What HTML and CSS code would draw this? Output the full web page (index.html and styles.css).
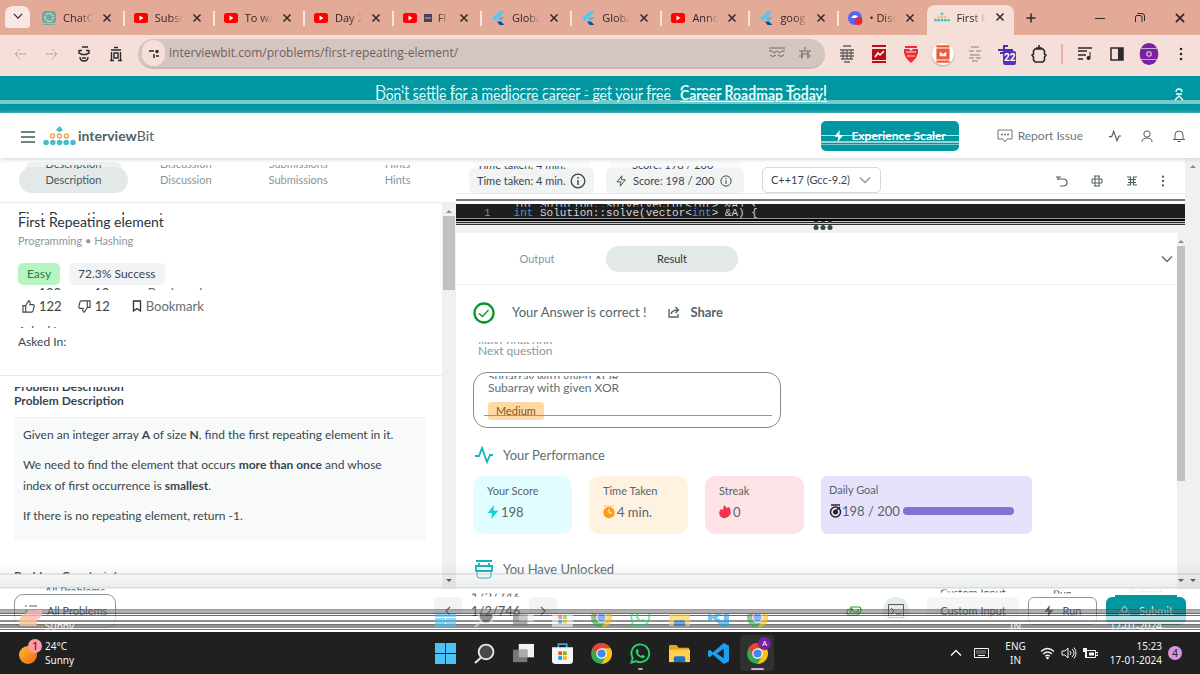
FILE: index.html
```html
<!DOCTYPE html>
<html lang="en">
<head>
<meta charset="utf-8">
<title>First Repeating element - InterviewBit</title>
<link rel="stylesheet" href="styles.css">
</head>
<body>
<svg class="defs" aria-hidden="true">
  <symbol id="x" viewBox="0 0 12 12"><path d="M2.500 2.500l7 7m0-7l-7 7" stroke="currentColor" stroke-width="1.500" fill="none"/></symbol>
  <symbol id="yt" viewBox="0 0 16 16"><rect x="1" y="3" width="14" height="10" rx="2.500" fill="#f00"/><path d="M6.500 5.500v5l4-2.500z" fill="#fff"/></symbol>
  <symbol id="flutter" viewBox="0 0 16 16"><path d="M10 1h5L5 11 2 8.500z" fill="#54c5f8"/><path d="M10 7h5l-4.500 4L8 9z" fill="#45bdf0"/><path d="M7 11.500h4l3.500 3.500h-5z" fill="#01579b"/></symbol>
  <symbol id="pyr" viewBox="0 0 33 20"><g fill="#4bbcc4"><path d="M16.500 0l4 4.500h-8z"/><circle cx="16.500" cy="4" r="2"/><circle cx="3" cy="16.500" r="2.800"/><circle cx="9.800" cy="16.500" r="2.800"/><circle cx="16.500" cy="16.500" r="2.800"/><circle cx="23.200" cy="16.500" r="2.800"/><circle cx="30" cy="16.500" r="2.800"/></g><g fill="none" stroke="#e8ab55" stroke-width="1.500"><circle cx="9.500" cy="10" r="2"/><circle cx="16.500" cy="10" r="2"/><circle cx="23.500" cy="10" r="2"/></g></symbol>
  <symbol id="bolt" viewBox="0 0 12 16"><path d="M7 0L0 9h5l-1 7 8-9.500H6.500z" fill="currentColor"/></symbol>
  <symbol id="boltline" viewBox="0 0 12 16"><path d="M7 2L1.500 9H6l-1 5 6-7.500H6.500z" fill="none" stroke="currentColor"/></symbol>
  <symbol id="info" viewBox="0 0 16 16"><circle cx="8" cy="8" r="6.800" fill="none" stroke="currentColor" stroke-width="1.300"/><path d="M8 7v5M8 4v1.500" stroke="currentColor" stroke-width="1.400"/></symbol>
  <symbol id="chev" viewBox="0 0 12 12"><path d="M1 3.500l5 5 5-5" fill="none" stroke="currentColor" stroke-width="1.400"/></symbol>
  <symbol id="pulse" viewBox="0 0 18 18"><path d="M0 10h4L7 2l5 14 3-7h3" fill="none" stroke="currentColor" stroke-width="1.800"/></symbol>
  <symbol id="thumb" viewBox="0 0 14 14"><path d="M1 6h3v7H1zM4 6l3-5c2 0 2 1.500 1.500 4H12c1 0 1.300.8 1 2l-1 4.500c-.2 1-.8 1.500-1.500 1.500H4" fill="none" stroke="currentColor" stroke-width="1.200"/></symbol>
  <symbol id="puzzle" viewBox="0 0 16 18"><path d="M5 3h6M8 0v3M2.500 6L4 4h8l1.500 2v3L15 10l-1.500 2v3L12 17H4l-1.500-2v-3L1 10l1.500-1z" fill="none" stroke="currentColor" stroke-width="1.600"/></symbol>
  <symbol id="win" viewBox="0 0 20 20"><path d="M0 0h9.600v9.600H0zM10.400 0H20v9.600h-9.600zM0 10.400h9.600V20H0zM10.400 10.400H20V20h-9.600z" fill="#4cc2f8"/></symbol>
  <symbol id="search" viewBox="0 0 20 20"><circle cx="11.500" cy="8.500" r="7" fill="#484848" stroke="#e6e6e6" stroke-width="1.800"/><path d="M6.500 14L1 19" stroke="#e6e6e6" stroke-width="2"/></symbol>
  <symbol id="tasks" viewBox="0 0 22 20"><path d="M6 0h16v14H6z" fill="#f2f2f2"/><path d="M0 6h15v13H0z" fill="#777"/><path d="M6 6h9v8H6z" fill="#aaa"/></symbol>
  <symbol id="store" viewBox="0 0 20 20"><path d="M6 5V1h8v4" fill="none" stroke="#32a9e8" stroke-width="1.600"/><path d="M0 4h20v13q0 3-3 3H3q-3 0-3-3z" fill="#f4f4f4"/><path d="M6 8h3.500v3.500H6z" fill="#f25022"/><path d="M10.500 8H14v3.500h-3.500z" fill="#7fba00"/><path d="M6 12.500h3.500V16H6z" fill="#00a4ef"/><path d="M10.500 12.500H14V16h-3.500z" fill="#ffb900"/></symbol>
  <symbol id="chrome" viewBox="0 0 20 20"><circle cx="10" cy="10" r="10" fill="#34a853"/><path d="M1.340 5A10 10 0 0 1 18.660 5H10L5.700 12.500z" fill="#ea4335"/><path d="M18.660 5A10 10 0 0 1 10 20l4.300-7.500L10 5z" fill="#fbc116"/><circle cx="10" cy="10" r="5" fill="#fff"/><circle cx="10" cy="10" r="3.900" fill="#4285f4"/></symbol>
  <symbol id="whats" viewBox="0 0 22 22"><path d="M1.500 20.500l1.300-5A9.300 9.300 0 1 1 6.500 19z" fill="none" stroke="#25d366" stroke-width="2"/><path d="M8 6l1.300 3-1 1.200c.8 1.600 2 2.700 3.500 3.300l1.200-1.300 2.600 1.300c0 2-1.800 2.800-3.500 2.300-3.200-1-5.500-3.500-6.100-6.300C5.900 7.700 6.700 6 8 6z" fill="#25d366"/></symbol>
  <symbol id="folder" viewBox="0 0 22 20"><path d="M0 2q0-1 1-1h7l2 3h11v14H0z" fill="#e8a317"/><path d="M0 6h22v13H0z" fill="#ffd04f"/><path d="M5 19v-4q0-2 2-2h8q2 0 2 2v4z" fill="#1976c5"/></symbol>
  <symbol id="vs" viewBox="0 0 20 20"><path d="M15 0l5 2.500v15L15 20 4.500 11 2 13.500 0 12.500v-5l2-1L4.500 9zM15 5.500L8.500 10l6.500 4.500z" fill="#1f9cf0"/></symbol>
  <symbol id="menu3" viewBox="0 0 4 16"><g fill="currentColor"><circle cx="2" cy="3" r="1.300"/><circle cx="2" cy="8" r="1.300"/><circle cx="2" cy="13" r="1.300"/></g></symbol>
</svg>

<nav class="browser-tabs" aria-label="Browser tabs">
  <button class="tab-search" aria-label="Search tabs"><svg width="10" height="10"><use href="#chev"/></svg></button>
  <div class="tab"><svg width="16" height="16" viewBox="0 0 16 16"><rect x="1" y="1" width="14" height="12" rx="3" fill="#74aa9c"/><circle cx="8" cy="7.500" r="4" fill="none" stroke="#fff" stroke-dasharray="2 1"/><path d="M2 14.500h12" stroke="#74aa9c"/></svg><span>ChatG</span><svg class="close"><use href="#x"/></svg></div>
  <div class="tab"><svg width="16" height="16"><use href="#yt"/></svg><span>Subsc</span><svg class="close"><use href="#x"/></svg></div>
  <div class="tab"><svg width="16" height="16"><use href="#yt"/></svg><span>To wa</span><svg class="close"><use href="#x"/></svg></div>
  <div class="tab"><svg width="16" height="16"><use href="#yt"/></svg><span>Day 2</span><svg class="close"><use href="#x"/></svg></div>
  <div class="tab"><svg width="16" height="16"><use href="#yt"/></svg><span><svg width="8" height="8" viewBox="0 0 8 8"><path d="M0 0h8v8H0z" fill="#445"/><path d="M1 4h6" stroke="#eac" /></svg>&nbsp; Fl</span><svg class="close"><use href="#x"/></svg></div>
  <div class="tab"><svg width="16" height="16"><use href="#flutter"/></svg><span>Globa</span><svg class="close"><use href="#x"/></svg></div>
  <div class="tab"><svg width="16" height="16"><use href="#flutter"/></svg><span>Globa</span><svg class="close"><use href="#x"/></svg></div>
  <div class="tab"><svg width="16" height="16"><use href="#yt"/></svg><span>Anno</span><svg class="close"><use href="#x"/></svg></div>
  <div class="tab"><svg width="16" height="16"><use href="#flutter"/></svg><span>goog</span><svg class="close"><use href="#x"/></svg></div>
  <div class="tab"><svg width="16" height="16" viewBox="0 0 16 16"><circle cx="8" cy="8" r="7" fill="#5865f2"/><path d="M4 8q4-6 8 0z" fill="#fff"/><circle cx="11.500" cy="11" r="4" fill="#e02b36"/></svg><span>• Disc</span><svg class="close"><use href="#x"/></svg></div>
  <div class="tab active"><svg width="16" height="10"><use href="#pyr"/></svg><span>First R</span><svg class="close"><use href="#x"/></svg></div>
  <button class="new-tab" aria-label="New tab"><svg width="12" height="12" viewBox="0 0 12 12"><path d="M6 1.500v9M1.500 6h9" stroke="currentColor" stroke-width="1.500"/></svg></button>
  <div class="window-controls">
    <button aria-label="Minimize"><svg width="10" height="10" viewBox="0 0 10 10"><path d="M0 5.500h10" stroke="currentColor"/></svg></button>
    <button aria-label="Restore"><svg width="10" height="10" viewBox="0 0 10 10"><path d="M.5 9V4q0-1.500 1.500-1.500h3Q7 2.500 7 4v5M2.500.5H7q2.500 0 2.500 2.500v5" fill="none" stroke="currentColor"/></svg></button>
    <button aria-label="Close window"><svg width="14" height="14"><use href="#x"/></svg></button>
  </div>
</nav>

<div class="toolbar">
  <div class="nav-buttons">
    <button class="faint" aria-label="Back"><svg width="12" height="16" viewBox="0 0 12 16"><path d="M12 8H2m4-5L1 8l5 5" fill="none" stroke="currentColor" stroke-dasharray="3 1"/></svg></button>
    <button class="faint" aria-label="Forward"><svg width="12" height="16" viewBox="0 0 12 16"><path d="M0 8h10M6 3l5 5-5 5" fill="none" stroke="currentColor" stroke-dasharray="3 1"/></svg></button>
    <button aria-label="Reload"><svg width="12" height="16" viewBox="0 0 12 16"><path d="M4 1h6M1 4.500h3M8 4.500h3M1 4v3l3 1.500h4L11 7V4M2 11q0 4 4 4t4-4M4 12h4" fill="none" stroke="currentColor" stroke-width="1.400"/></svg></button>
    <button aria-label="Home"><svg width="12" height="16" viewBox="0 0 12 16"><path d="M4 1.500h4M1 4h10M1.500 6v9M10.500 6v9M4 7h4v5H4zM0 14.500h4m4 0h4" fill="none" stroke="currentColor" stroke-width="1.400"/></svg></button>
  </div>
  <div class="omnibox">
    <button class="site" aria-label="Site information"><svg width="12" height="12" viewBox="0 0 12 12"><path d="M1 4h5m2 5h3M6 7v4" stroke="currentColor" stroke-width="1.500"/><circle cx="9" cy="4.500" r="1.700" fill="currentColor"/></svg></button>
    <input aria-label="Address" value="interviewbit.com/problems/first-repeating-element/">
    <svg width="18" height="12" viewBox="0 0 18 12"><path d="M1 1h16M1 4h3l2 2 3-2 3 2 2-2h3M2 8q3 3 6 0m2 0q3 3 6 0" stroke="#77656a" fill="none"/></svg>
    <svg width="14" height="14" viewBox="0 0 14 14"><path d="M7 1v3M1 5h12M3 8h8M4 5v8M10 5v8M1 10h4m4 0h4" stroke="#77656a"/></svg>
  </div>
  <div class="extensions">
    <svg viewBox="0 0 20 20"><g stroke="#66605f" stroke-width="1.300"><path d="M6 2h8M3 6h14M3 9h14M3 12h14M4 15h12M7 18h6M6 6v9M10 6v9M14 6v9"/></g></svg>
    <svg viewBox="0 0 20 20"><path d="M3 1h14v2H3zM3 5h14v11H3zM3 17h14v2H3z" fill="#b90f16"/><path d="M6 13l3-4 2 2 4-4" stroke="#fff" fill="none" stroke-width="1.500"/></svg>
    <svg viewBox="0 0 20 20"><path d="M4 2h12v2H4zM3 5h5l2 2 2-2h5v4l-2 5-5 5-5-5-2-5z" fill="#ef2935"/><path d="M5 8h10M6 12h8" stroke="#f4dfd9"/></svg>
    <svg class="disc" viewBox="0 0 20 20"><circle cx="10" cy="10" r="10" fill="#fff"/><path d="M4 2h12v2H4zM4 5h12v10H4zM4 16h12v2H4z" fill="#f05a38"/><path d="M7 8l3 2 3-2v4H7z" fill="#fff"/></svg>
    <svg viewBox="0 0 20 20"><path d="M6 3h8M4 7h5m2 0h5M5 11h10M4 14h5m2 0h5M7 17h6" stroke="#aaa09e" stroke-width="1.600"/></svg>
    <span class="count-ext"><svg viewBox="0 0 20 20"><path d="M6 2h5M1 6h15M3 9h8M7 3v9" stroke="#522ab0" stroke-width="2"/></svg><b>22</b></span>
    <svg viewBox="0 0 20 20" color="#2c292b"><use href="#puzzle" x="2" y="1" width="16" height="18"/></svg>
    <i></i>
    <svg viewBox="0 0 20 20"><path d="M3 4h14M3 7h9M3 11h8M3 15h5" stroke="#2c292b" stroke-width="1.600"/><path d="M15 8v6" stroke="#2c292b"/><circle cx="13.500" cy="14" r="2" fill="#2c292b"/></svg>
    <svg viewBox="0 0 20 20"><path d="M4 4h12v12H4z" fill="none" stroke="#2c292b" stroke-width="1.500"/><path d="M11 4h5v12h-5z" fill="#2c292b"/></svg>
    <svg class="disc flat" viewBox="0 0 20 20"><ellipse cx="10" cy="10" rx="8.500" ry="10" fill="#7a20a2"/><path d="M2 5h16M2 15h16" stroke="#cba2d5"/><circle cx="10" cy="10" r="2" fill="none" stroke="#e8cff0"/></svg>
    <svg viewBox="-8 0 20 16" color="#2c292b"><use href="#menu3" width="4" height="16"/></svg>
  </div>
</div>

<div class="banner">
  <p><span class="echo" data-echo="Don't settle for a mediocre career - get your free">Don't settle for a mediocre career - get your free</span><a href="#roadmap" class="echo" data-echo="Career Roadmap Today!">Career Roadmap Today!</a></p>
  <button aria-label="Dismiss"><svg width="12" height="14" viewBox="0 0 12 14"><path d="M3 4q0-3 3-3t3 3M3 6h6M2 12l4-4 4 4" fill="none" stroke="#fff" stroke-width="1.300"/></svg></button>
</div>

<header class="site-header">
  <button aria-label="Menu"><svg width="14" height="12" viewBox="0 0 14 12"><path d="M0 1h14M0 6h14M0 11h14" stroke="#44595c" stroke-width="1.500"/></svg></button>
  <a class="logo" href="#home"><svg width="33" height="20"><use href="#pyr"/></svg><b>interview</b>Bit</a>
  <button class="scaler"><svg width="12" height="12"><use href="#bolt"/></svg>Experience Scaler</button>
  <a class="report" href="#report"><svg width="16" height="14" viewBox="0 0 16 14"><path d="M1 1h14v9h-5l-2 3-2-3H1z" fill="none" stroke="currentColor"/><path d="M4 5.500h8" stroke="currentColor" stroke-width="1.500" stroke-dasharray="2 1"/></svg>Report Issue</a>
  <button aria-label="Activity"><svg width="12" height="12"><use href="#pulse"/></svg></button>
  <button aria-label="Profile"><svg width="12" height="12" viewBox="0 0 12 12"><circle cx="6" cy="4" r="3.200" fill="none" stroke="currentColor"/><path d="M1 12q0-4 5-4t5 4" fill="none" stroke="currentColor"/></svg></button>
  <button aria-label="Notifications"><svg width="12" height="12" viewBox="0 0 12 12"><path d="M0 9.500h12M2 9V5q0-4 4-4t4 4v4M4.500 11.500h3" fill="none" stroke="currentColor"/></svg></button>
</header>

<main>
  <section class="problem">
    <nav class="problem-tabs">
      <a class="echo on" data-echo="Description" href="#d">Description</a>
      <a class="echo" data-echo="Discussion" href="#di">Discussion</a>
      <a class="echo" data-echo="Submissions" href="#s">Submissions</a>
      <a class="echo" data-echo="Hints" href="#h">Hints</a>
    </nav>
    <div class="problem-scroll">
      <div class="problem-body">
        <div class="summary">
          <h1 class="echo" data-echo="First Repeating element">First Repeating element</h1>
          <p class="topics">Programming • Hashing</p>
          <p class="badges"><span class="easy">Easy</span><span class="rate">72.3% Success</span></p>
          <div class="votes">
            <button class="echo" data-echo="122"><svg width="13" height="13"><use href="#thumb"/></svg>122</button>
            <button class="echo" data-echo="12"><svg class="down" width="13" height="13"><use href="#thumb"/></svg>12</button>
            <button class="echo mark" data-echo="Bookmark"><svg width="10" height="12" viewBox="0 0 10 12"><path d="M1.500 1h7v10L5 8.500 1.500 11z" fill="none" stroke="#263238" stroke-width="1.300"/></svg>Bookmark</button>
          </div>
          <p class="asked echo" data-echo="Asked In:">Asked In:</p>
        </div>
        <div class="statement">
          <h2 class="echo" data-echo="Problem Description">Problem Description</h2>
          <div class="text">
            <p>Given an integer array <b>A</b> of size <b>N</b>, find the first repeating element in it.</p>
            <p>We need to find the element that occurs <b>more than once</b> and whose<br>index of first occurrence is <b>smallest</b>.</p>
            <p>If there is no repeating element, return -1.</p>
          </div>
          <h2 class="cut">Problem Constraints</h2>
        </div>
      </div>
      <div class="scrollbar ends"><span></span></div>
    </div>
  </section>

  <section class="workspace">
    <div class="editor-bar">
      <span class="chip time echo" data-echo="Time taken: 4 min.">Time taken: 4 min.<svg width="16" height="16"><use href="#info"/></svg></span>
      <span class="chip score echo" data-echo="Score: 198 / 200"><svg width="12" height="14"><use href="#boltline"/></svg>Score: 198 / 200<svg width="12" height="12"><use href="#info"/></svg></span>
      <label class="lang"><select aria-label="Language"><option>C++17 (Gcc-9.2)</option></select><svg width="12" height="12"><use href="#chev"/></svg></label>
      <div class="editor-tools">
        <button aria-label="Reset"><svg width="12" height="12" viewBox="0 0 12 12"><path d="M0 2h5M2 4h5q4 0 4 3.500T7 11H4M2 2v3" fill="none" stroke="currentColor" stroke-width="1.200"/></svg></button>
        <button aria-label="Settings"><svg width="12" height="12" viewBox="0 0 12 12"><path d="M3 1h6M1 4h10M1 8h10M3 11h6M1 4v4M11 4v4M4 1v10M8 1v10" stroke="currentColor"/></svg></button>
        <button aria-label="Shortcuts"><svg width="12" height="12" viewBox="0 0 12 12"><path d="M1 2h3.500v8M1 10h3.500M11 2H7.500v8H11M2 4.500h8M2 7.500h8" fill="none" stroke="currentColor" stroke-width="1.200"/></svg></button>
        <button aria-label="More"><svg width="4" height="14"><use href="#menu3"/></svg></button>
      </div>
    </div>
    <div class="editor"><span class="line-no">1</span><code class="echo" data-echo="int Solution::solve(vector&lt;int&gt; &amp;A) {"><i>int</i> Solution::solve(vector&lt;<i>int</i>&gt; &amp;A) {</code></div>
    <div class="splitter"><svg width="20" height="10" viewBox="0 0 20 10"><g fill="#33474b"><path d="M1 0h4v2H1zM8 0h4v2H8zM15 0h4v2h-4z"/><circle cx="3" cy="6.500" r="2.500"/><circle cx="10" cy="6.500" r="2.500"/><circle cx="17" cy="6.500" r="2.500"/></g></svg></div>
    <div class="result-scroll">
      <div class="result">
        <div class="result-tabs"><button>Output</button><button class="on">Result</button><svg width="12" height="12"><use href="#chev"/></svg></div>
        <div class="result-body">
          <div class="verdict"><svg width="22" height="22" viewBox="0 0 22 22"><circle cx="11" cy="11" r="9.500" fill="none" stroke="#0a9627" stroke-width="2.300"/><path d="M6 11.500l3.500 3 6-6.500" fill="none" stroke="#0a9627" stroke-width="1.400"/></svg><span>Your Answer is correct !</span><button><svg width="12" height="12" viewBox="0 0 12 12"><path d="M1 3v8h9V8M3 8q1-4 7-4M7.500 1l3 3-3 3" fill="none" stroke="currentColor" stroke-width="1.400"/></svg>Share</button></div>
          <p class="next echo" data-echo="Next question">Next question</p>
          <a class="next-card" href="#next"><span class="echo" data-echo="Subarray with given XOR">Subarray with given XOR</span><em>Medium</em></a>
          <h3><svg width="18" height="18"><use href="#pulse"/></svg>Your Performance</h3>
          <div class="stats">
            <div class="stat cyan"><h4>Your Score</h4><p><svg width="12" height="14" color="#12cfd2"><use href="#bolt"/></svg>198</p></div>
            <div class="stat amber"><h4>Time Taken</h4><p><svg width="12" height="14" viewBox="0 0 12 14"><circle cx="6" cy="7.500" r="5.700" fill="#ff9b13"/><path d="M1 1h10" stroke="#ffb04d" stroke-dasharray="2 1"/><path d="M6 4v4h3" stroke="#fff" fill="none"/></svg>4 min.</p></div>
            <div class="stat rose"><h4>Streak</h4><p><svg width="12" height="14" viewBox="0 0 12 14"><path d="M5 0l3 3 2-1q3 5 1 8-5 6-10 1-2-4 1-7l2 1z" fill="#f4314f"/></svg>0</p></div>
            <div class="stat violet"><h4>Daily Goal</h4><p><svg width="13" height="14" viewBox="0 0 13 14"><circle cx="6.500" cy="8" r="5" fill="none" stroke="#272431" stroke-width="1.500"/><path d="M5 8.500L11 3M2 1h9" stroke="#272431" stroke-width="1.500"/><circle cx="6.500" cy="8" r="2.500" fill="#272431"/></svg>198 / 200<progress value="198" max="198" aria-label="Daily goal"></progress></p></div>
          </div>
          <h3 class="unlocked"><svg width="18" height="20" viewBox="0 0 18 20"><path d="M1 2h16M4 4v3M14 4v3" stroke="#0fb4bb" stroke-width="1.800"/><path d="M1 7h16v5H1z" fill="#fff" stroke="#0fb4bb" stroke-width="1.800"/><path d="M2 13v4q0 2 3 2h8q3 0 3-2v-4" fill="none" stroke="#0fb4bb"/></svg>You Have Unlocked</h3>
        </div>
      </div>
      <div class="scrollbar slim ends"><span></span></div>
    </div>
  </section>
  <div class="scrollbar page-scroll ends"></div>
</main>

<footer>
  <button class="all echo" data-echo="All Problems"><svg width="12" height="12" viewBox="0 0 12 12"><path d="M0 1h2m2 0h8M0 6h2m2 0h8M0 11h2m2 0h8" stroke="currentColor"/></svg>All Problems</button>
  <div class="pager"><button aria-label="Previous"><svg class="left" width="10" height="10"><use href="#chev"/></svg></button><span class="echo" data-echo="1/2/746">1/2/746</span><button aria-label="Next"><svg class="right" width="10" height="10"><use href="#chev"/></svg></button></div>
  <div class="actions">
    <svg width="16" height="12" viewBox="0 0 16 12"><path d="M5 2h8q2 0 2 3t-4 5H3q-2 0-2-3t4-3zM4 8l2-4 2 3h4V4" fill="none" stroke="#1aa827" stroke-width="1.200"/></svg>
    <button class="console" aria-label="Console"><svg width="16" height="14" viewBox="0 0 16 14"><path d="M.5.500h15v13H.5zM3 4l3 3-3 3m5 0h5" fill="none" stroke="currentColor"/></svg></button>
    <button class="custom echo" data-echo="Custom Input">Custom Input</button>
    <button class="run echo" data-echo="Run"><svg width="10" height="12"><use href="#bolt"/></svg>Run</button>
    <button class="submit echo" data-echo="Submit"><svg width="11" height="11" viewBox="0 0 12 12"><path d="M6 1l4 5H8v2H4V6H2zM1 8v3h10V8" fill="none" stroke="currentColor"/></svg>Submit</button>
  </div>
  <div class="bands" aria-hidden="true"></div>
</footer>

<div class="taskbar">
  <div class="reflection" aria-hidden="true">
    <svg><use href="#win"/></svg><svg><use href="#search"/></svg><svg><use href="#tasks"/></svg><svg><use href="#store"/></svg><svg><use href="#chrome"/></svg><svg><use href="#whats"/></svg><svg><use href="#folder"/></svg><svg><use href="#vs"/></svg><svg><use href="#chrome"/></svg>
  </div>
  <svg class="sun-reflection" aria-hidden="true" viewBox="0 0 24 26"><circle cx="9" cy="16" r="9" fill="#fbc38f"/><circle cx="16" cy="7" r="7" fill="#ffb5bd"/></svg>
  <div class="weather"><svg width="24" height="26" viewBox="0 0 24 26"><defs><linearGradient id="sun" x1="0" y1="0" x2="1" y2="1"><stop offset="0" stop-color="#f9bd35"/><stop offset="1" stop-color="#ef6816"/></linearGradient></defs><circle cx="9" cy="16" r="9" fill="url(#sun)"/><circle cx="16" cy="7" r="7" fill="#ff99a4"/><text x="13" y="11" font-size="11" fill="#222">1</text></svg><p>24°C<br><span class="echo" data-echo="Sunny">Sunny</span></p></div>
  <div class="apps">
    <button aria-label="Start"><svg><use href="#win"/></svg></button>
    <button aria-label="Search"><svg><use href="#search"/></svg></button>
    <button aria-label="Task view"><svg><use href="#tasks"/></svg></button>
    <button aria-label="Store"><svg><use href="#store"/></svg></button>
    <button aria-label="Chrome"><svg><use href="#chrome"/></svg></button>
    <button class="running" aria-label="WhatsApp"><svg><use href="#whats"/></svg></button>
    <button aria-label="Explorer"><svg><use href="#folder"/></svg></button>
    <button aria-label="Code"><svg><use href="#vs"/></svg></button>
    <button class="current" aria-label="Chrome profile"><svg><use href="#chrome"/></svg><b>A</b></button>
  </div>
  <div class="tray">
    <svg class="up" width="12" height="12"><use href="#chev"/></svg>
    <svg class="keys" width="15" height="12" viewBox="0 0 15 12"><path d="M.5 1.500h14v9H.5zM4 8.500h7" fill="none" stroke="currentColor"/><path d="M2.500 4h10M2.500 6h10" stroke="currentColor" stroke-dasharray="1 1"/></svg>
    <p class="ime">ENG<br><span class="echo" data-echo="IN">IN</span></p>
    <svg class="wifi" width="15" height="14" viewBox="0 0 15 14"><path d="M1 5.500q6.500-6 13 0M3 8q4.500-4 9 0M5.200 10.200q2.300-2 4.600 0" fill="none" stroke="currentColor" stroke-width="1.300"/><circle cx="7.500" cy="12" r="1.300" fill="currentColor"/></svg>
    <svg width="16" height="14" viewBox="0 0 16 14"><path d="M1 5h3l3-3v10L4 9H1zM9 5q2 2 0 4M11 3q4 4 0 8M13 1.500q4 5.500 0 11" fill="none" stroke="currentColor"/></svg>
    <svg width="15" height="14" viewBox="0 0 15 14"><path d="M3.500 4.500h9v7h-9zM13 6.500h2v3h-2" fill="none" stroke="currentColor"/><path d="M6 6.500h5v3H6zM0 2h4v4H0zM2 6h2v6H2z" fill="currentColor"/></svg>
    <p class="clock">15:23<br><span class="echo" data-echo="17-01-2024">17-01-2024</span></p>
    <b class="badge">4</b>
  </div>
</div>
</body>
</html>
```
FILE: styles.css
```css
* { box-sizing: border-box; }
body { margin: 0; min-height: 100vh; display: flex; flex-direction: column; font: 12px/20px Lato, sans-serif; color: #37474f; background: #fff; }
h1, h2, h3, h4, p { margin: 0; font-weight: 400; }
button, select, input { font: inherit; color: inherit; border: 0; background: none; padding: 0; margin: 0; }
button { white-space: nowrap; }
a { color: inherit; text-decoration: none; }
svg { flex: none; }
.defs { position: absolute; width: 0; height: 0; }

/* partial repeat of a label, drawn over the rows above it */
.echo { position: relative; }
.echo::before { content: attr(data-echo); position: absolute; left: 0; right: 0; top: -16px; white-space: pre; clip-path: inset(55% 0 25% 0); pointer-events: none; text-align: center; }

/* browser */
.browser-tabs { height: 35px; background: #e3aa98; display: flex; align-items: center; font: 11px "Open Sans", sans-serif; color: #33272a; }
.tab-search { flex: none; width: 25px; height: 22px; margin: 0 4px 2px 5px; border-radius: 8px 8px 3px 3px; background: #f8e8e4; }
.tab { flex: 0 1 89px; height: 30px; display: flex; align-items: center; padding: 0 9px 0 7px; gap: 6px; position: relative; }
.tab:nth-child(3n) { flex-basis: 88px; }
.tab > span { flex: 1; min-width: 0; overflow: hidden; white-space: nowrap; mask-image: linear-gradient(90deg, #000 50%, transparent 95%); }
.tab .close { width: 12px; height: 12px; margin-right: 4px; }
.tab::after { content: ""; position: absolute; right: 1px; top: 8px; width: 2px; height: 15px; background: #f7e5df; }
.tab:nth-last-child(4)::after, .tab.active::after { display: none; }
.tab.active { background: #f4dfd9; border-radius: 8px 8px 0 0; align-self: flex-end; margin-left: -2px; padding: 0 4px 6px 7px; flex-basis: 83px; }
.new-tab { width: 34px; display: grid; place-items: center; }
.window-controls { margin-left: auto; display: flex; }
.window-controls button { width: 40px; height: 30px; display: grid; place-items: center; }
.toolbar { height: 41px; background: #f4dfd9; display: flex; align-items: center; padding: 0 9px 4px; color: #2c292b; }
.nav-buttons { display: flex; gap: 20px; padding: 0 16px 0 5px; }
.nav-buttons button { display: grid; }
.faint { color: #a89794; }
.omnibox { flex: 1; height: 30px; border-radius: 15px; background: #d5c5c0; display: flex; align-items: center; gap: 12px; padding: 0 13px 0 4px; border-bottom: 2px solid #cbb8b3; }
.site { width: 23px; height: 26px; border-radius: 12px; background: #f4dfd9; display: grid; place-items: center; }
.omnibox input { flex: 1; min-width: 0; margin-left: -8px; color: #6d5f60; font: 12px "Open Sans", sans-serif; }
.extensions { display: flex; align-items: center; gap: 12px; padding-left: 12px; }
.extensions svg { width: 20px; height: 20px; display: block; }
.extensions .disc { width: 22px; height: 22px; margin: 0 -1px; border-radius: 11px; box-shadow: 0 1px 2px #b8a09a; }
.extensions .flat { box-shadow: none; }
.extensions i { width: 2px; height: 20px; background: #e8b1a4; }
.count-ext { position: relative; }
.count-ext b { position: absolute; left: 6px; top: 7px; background: #5a32b5; color: #fff; font: 700 10px/14px Roboto, sans-serif; padding: 0 1px; border-radius: 2px; }

/* page header */
.banner { min-height: 37px; display: flex; align-items: center; padding: 0 15px; color: #e9ffff; background: linear-gradient(transparent 24px, #79c8cc 24px 28px, transparent 28px) #0097a0; }
.banner p { flex: 1; display: flex; justify-content: center; gap: 9px; font-size: 14px; padding-left: 14px; }
.banner a { font-weight: 700; text-decoration: underline; }
.banner .echo::before { top: -5px; clip-path: inset(25% 0 45% 0); }
.banner button { display: grid; }
.site-header { min-height: 45px; display: flex; align-items: center; padding: 0 15px 0 21px; position: relative; z-index: 2; background: #fff; box-shadow: 0 1px 5px #ccd2d3; color: #4f6164; }
.site-header > button { display: grid; margin-left: 20px; }
.site-header > button:first-child { margin: 3px 8px 0 0; }
.logo { display: flex; align-items: center; font-size: 14px; margin-right: auto; }
.logo svg { margin-right: 2px; }
.logo b { font-weight: 700; }
.site-header .scaler { display: flex; align-items: center; justify-content: center; gap: 6px; width: 138px; height: 30px; margin: 0 38px 0 0; border-radius: 5px; color: #fff; font-weight: 700; background: linear-gradient(transparent 14px, #b7e0e2 14px 15px, transparent 15px 20px, #9ad4d7 20px 22px, transparent 22px 23px, #79c8cc 23px 24px, transparent 24px) #0097a0; }
.report { display: flex; align-items: center; gap: 5px; color: #6b787b; margin-right: 6px; }

/* panes */
main { flex: 1; display: flex; min-height: 431px; }
.problem { flex: 0 0 38%; min-width: 0; display: flex; flex-direction: column; }
.problem-tabs { height: 45px; display: flex; align-items: center; padding: 0 19px; border-bottom: 1px solid #e8ecec; font-size: 11px; color: #879597; overflow: hidden; }
.problem-tabs a { flex: none; padding: 3px 0; margin-right: 57px; }
.problem-tabs .on { width: 109px; text-align: center; border-radius: 13px; margin-right: 32px; background: #e3e8e8; color: #455a5e; box-shadow: 0 -11px 0 -6px #f0f2f2; }
.problem-tabs .echo::before { top: -13px; }
.problem-scroll { flex: 1; display: flex; }
.problem-body { flex: 1; min-width: 0; }
.scrollbar { width: 14px; background: #f0f0f0; padding: 13px 1px; }
.scrollbar span { display: block; height: 74px; background: #c1c1c1; }
.ends { position: relative; }
.ends::before, .ends::after { content: ""; position: absolute; left: 50%; margin-left: -3px; border: 3px solid transparent; }
.ends::before { top: 4px; border-bottom-color: #8b8b8b; }
.ends::after { bottom: 4px; border-top-color: #505050; }
.summary { height: 173px; padding: 9px 18px; border-bottom: 1px solid #e6eaea; }
.summary h1 { display: table; font-size: 14px; color: #263238; }
.summary h1.echo::before { top: -5px; clip-path: inset(25% 0 60% 0); }
.topics { font-size: 11px; color: #8a989b; line-height: 18px; }
.badges { display: flex; gap: 9px; margin-top: 13px; line-height: 22px; color: #37474f; }
.badges span { padding: 0 9px; border-radius: 5px; background: #f1f3f4; }
.badges .easy { background: #b6f5c1; color: #2c7a43; }
.votes { display: flex; gap: 16px; margin-top: 11px; padding-left: 4px; font-size: 13px; }
.votes button { display: flex; align-items: center; gap: 4px; }
.votes .echo::before { padding-left: 16px; top: -13px; clip-path: inset(25% 0 65% 0); }
.votes .mark { margin-left: 6px; color: #5e6e72; }
.down { transform: rotate(180deg); }
.asked { display: table; margin-top: 16px; }
.echo.asked::before { top: -11px; clip-path: inset(20% 0 65% 0); }
.statement { padding: 15px 16px 0 14px; }
.statement h2 { display: table; font-size: 12px; font-weight: 700; color: #37474f; }
.statement h2.echo::before { top: -14px; clip-path: inset(50% 0 30% 0); }
.text { margin-top: 6px; padding: 6px 9px 14px; background: #f8f9f9; border-top: 1px solid #f0f1f1; color: #37474f; line-height: 21px; }
.text p + p { margin-top: 9px; }
.statement .cut { margin-top: 26px; clip-path: inset(6px 0 12px 0); }

.workspace { flex: 1; min-width: 0; display: flex; flex-direction: column; }
.editor-bar { height: 36px; display: flex; align-items: flex-end; padding: 0 20px 0 13px; border-bottom: 1px solid #e8ecec; font-size: 11px; }
.chip { height: 25px; display: flex; align-items: center; white-space: nowrap; border-radius: 5px; background: #f2f4f4; box-shadow: 0 -14px 0 -4px #fafafa; }
.chip.echo::before { top: -13px; text-align: left; padding-left: 8px; }
.chip.score::before { padding-left: 26px; }
.time { width: 125px; padding: 0 8px; gap: 4px; margin-right: 12px; }
.score { width: 138px; padding: 0 9px; gap: 6px; margin-right: 18px; }
.lang { width: 119px; height: 26px; border: 1px solid #d3d9da; border-radius: 5px; display: flex; align-items: center; padding: 0 9px 0 8px; }
.lang select { flex: 1; appearance: none; min-width: 0; }
.lang svg { color: #899; }
.editor-tools { margin-left: auto; display: flex; align-items: center; gap: 23px; height: 25px; color: #4d5e61; }
.editor-tools button { display: grid; }
.editor { height: 31px; padding: 10px 28px 0; display: flex; gap: 23px; font: 11px/18px "Liberation Mono", monospace; color: #d4d4d4; background: linear-gradient(#fff 5px, #777 5px 7px, #fff 7px 10px, #1e1e1e 10px 24px, #999 24px 25px, #000 25px 27px, #ccc 27px 28px, #222 28px 29px, #ccc 29px 30px, #333 30px); }
.editor .line-no { color: #858585; }
.editor code { font: inherit; white-space: pre; }
.editor i { font-style: normal; color: #4f8fd0; }
.editor .echo::before { top: -8px; clip-path: inset(45% 0 40% 0); }
.splitter { height: 8px; padding-left: 5px; background: #f0f2f2; display: flex; justify-content: center; align-items: flex-end; }
.splitter svg { margin-bottom: 2px; }
.result-scroll { flex: 1; display: flex; }
.result { flex: 1; min-width: 0; }
.slim { width: 8px; padding: 13px 0; }
.slim span { height: 235px; }
.page-scroll { width: 15px; }
.result-tabs { height: 52px; display: flex; align-items: center; padding: 0 4px 0 15px; border-bottom: 1px solid #eceff0; font-size: 11px; color: #879597; }
.result-tabs button { width: 132px; height: 26px; border-radius: 13px; margin-right: 3px; }
.result-tabs .on { background: #e3e8e8; color: #263c40; }
.result-tabs svg { margin-left: auto; color: #5b6b6e; }
.result-body { padding: 17px 17px 0; }
.verdict { display: flex; align-items: center; font-size: 13px; color: #546669; }
.verdict span { margin: -2px 22px 0 17px; }
.verdict button { display: flex; align-items: center; gap: 10px; font-weight: 700; margin-top: -2px; }
.next { display: table; margin: 17px 0 11px 5px; color: #8a989b; }
.next.echo::before { top: -8px; clip-path: inset(45% 0 45% 0); }
.next-card { display: flex; flex-direction: column; align-items: flex-start; width: 308px; height: 56px; padding: 5px 14px; border: 1px solid #7f8d90; border-radius: 14px; position: relative; color: #5e6f72; }
.next-card::after { content: ""; position: absolute; left: 10px; right: 8px; top: 42px; height: 1px; background: #8c999b; }
.next-card .echo::before { top: -11px; clip-path: inset(45% 0 40% 0); }
.next-card em { margin-top: 4px; padding: 0 8px; border-radius: 3px; background: #ffd9a5; color: #8a5522; font-style: normal; font-size: 11px; line-height: 18px; }
.result-body h3 { display: flex; align-items: center; gap: 10px; margin: 17px 0 11px 2px; font-size: 13px; color: #5e6f72; }
.result-body h3 svg { color: #12b5bd; }
.stats { display: flex; gap: 17px; color: #546669; }
.stat { flex: 0 1 99px; min-width: 0; height: 58px; padding: 5px 14px; border-radius: 10px; }
.stat h4 { font-size: 11px; }
.stat p { display: flex; align-items: center; gap: 2px; font-size: 13px; line-height: 22px; white-space: nowrap; }
.cyan { background: #e2fdff; }
.amber { background: #fff2e1; }
.rose { background: #fee3e6; }
.violet { flex: 0 1 211px; padding: 4px 8px; border-radius: 6px; background: #e6e2fc; }
.violet p { gap: 0; }
progress { appearance: none; flex: 1; width: 0; min-width: 0; height: 8px; border: 0; margin: 0 10px 0 3px; }
progress::-webkit-progress-bar { background: #cfc7f4; border-radius: 4px; }
progress::-webkit-progress-value { background: #8273d2; border-radius: 4px; }
.result-body h3.unlocked { margin: 25px 0 0 2px; }

/* action bar */
footer { min-height: 43px; display: flex; align-items: center; padding: 0 14px; position: relative; background: #fff; color: #4a5b5e; }
footer::before { content: ""; position: absolute; left: 0; right: 0; top: -28px; height: 28px; pointer-events: none; background: linear-gradient(transparent 12px, #aab4 12px 14px, transparent 14px 26px, #d8dcdc 26px 27px, transparent 27px), linear-gradient(transparent, #99a3a333); }
footer .echo::before { top: -14px; clip-path: inset(35% 0 50% 0); }
.all { width: 102px; height: 34px; display: flex; align-items: center; gap: 10px; padding: 0 10px; border: 1px solid #8d9a9c; border-radius: 9px; font-size: 11px; }
footer .all::before { padding-left: 20px; }
.pager { display: flex; align-items: center; gap: 9px; margin-left: 318px; font-size: 13px; }
.pager button { width: 28px; height: 28px; border-radius: 5px; background: #f2f4f4; display: grid; place-items: center; }
.left { transform: rotate(90deg); }
.right { transform: rotate(-90deg); }
.actions { margin-left: auto; display: flex; align-items: center; gap: 9px; font-size: 11px; }
.console { width: 26px; height: 28px; border-radius: 13px; background: #e7eaea; display: grid; place-items: center; margin: 0 9px 0 12px; }
.custom { width: 92px; height: 28px; background: #f4f6f6; border-radius: 5px; }
.run, .submit { display: flex; align-items: center; justify-content: center; gap: 9px; }
.run { width: 69px; height: 28px; border: 1px solid #8d9a9c; border-radius: 6px; }
.submit { width: 80px; height: 28px; border-radius: 6px; background: #0097a0; color: #d4f1f2; box-shadow: 0 -11px 0 -9px #0097a0, 0 -14px 0 -12px #0097a0; }
.bands { position: absolute; inset: auto 0 0 0; height: 23px; pointer-events: none; background: linear-gradient(#4448 1px, #6668 1px 4px, #222a 4px 5px, #fff5 5px 6px, #333b 6px 7px, #fffb 7px 11px, #777c 11px 13px, #fffd 13px 15px, #555c 15px 16px, #777c 16px 19px, #fff 19px 20px, #777 20px 21px, #fff 21px); }

/* taskbar */
.taskbar { height: 42px; display: grid; grid-template-columns: 1fr auto 1fr; align-items: center; background: #202020; color: #f4f4f4; position: relative; font: 10px/14px "Noto Sans", sans-serif; }
.weather { display: flex; gap: 2px; padding-left: 19px; }
.apps { display: flex; gap: 5px; padding-left: 2px; }
.apps button { width: 34px; height: 36px; display: grid; place-items: center; position: relative; }
.apps svg { width: 21px; height: 21px; }
.apps .current { background: #303030; border-radius: 4px; }
.apps .current b { position: absolute; right: 3px; top: 2px; width: 13px; height: 13px; border-radius: 7px; background: #7a20a2; font: 8px/13px Roboto, sans-serif; color: #fff; }
.running::after, .current::after { content: ""; position: absolute; bottom: 1px; width: 5px; height: 2px; border-radius: 1px; background: #aaa; }
.current::after { width: 13px; background: #d9a4e0; }
.reflection { position: absolute; left: 2px; right: 0; top: -25px; height: 25px; display: flex; justify-content: center; gap: 18px; opacity: .6; clip-path: inset(7px 0 5px 0); }
.reflection svg { width: 21px; height: 21px; }
.sun-reflection { position: absolute; left: 19px; top: -26px; width: 24px; height: 26px; clip-path: inset(4px 0 6px 0); opacity: .8; }
.tray { justify-self: end; display: flex; align-items: center; padding-right: 18px; gap: 6px; }
.up { transform: rotate(180deg); }
.keys { margin: 0 10px 0 6px; }
.ime { text-align: center; margin-right: 8px; }
.clock { text-align: right; margin-left: 6px; }
.taskbar .echo::before { top: -34px; clip-path: inset(10% 0 25% 0); }
.badge { width: 14px; height: 14px; border-radius: 7px; background: #d895e4; color: #222; text-align: center; font-weight: 400; }
```
